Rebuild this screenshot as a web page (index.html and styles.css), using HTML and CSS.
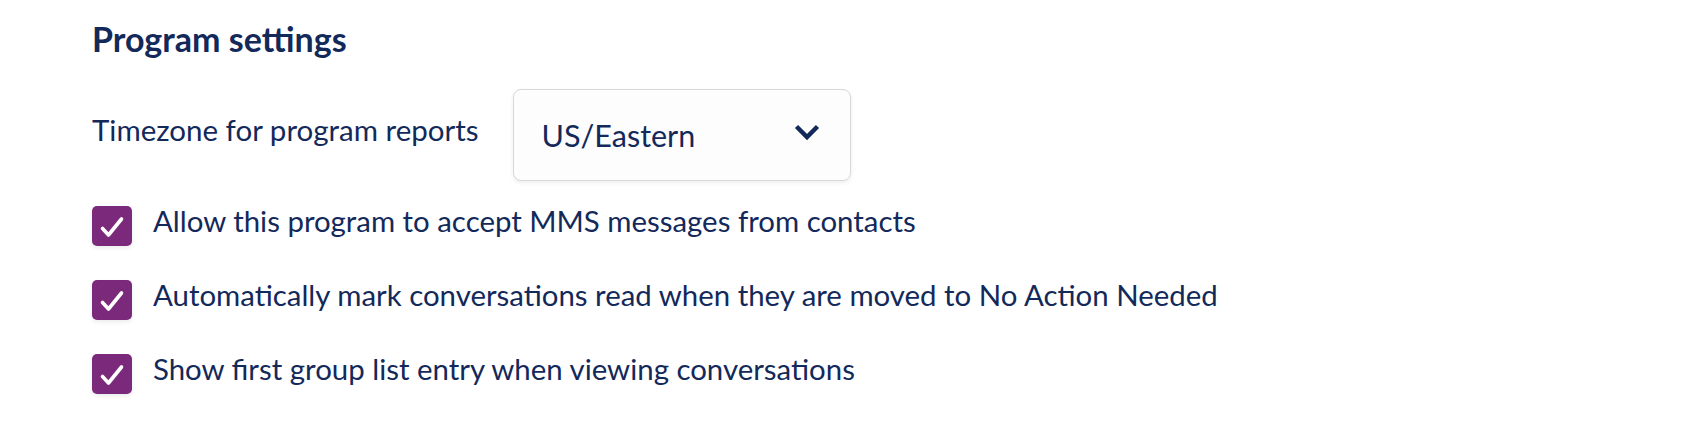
FILE: index.html
```html
<!DOCTYPE html>
<html lang="en">
<head>
    <meta charset="UTF-8">
    <meta name="viewport" content="width=device-width, initial-scale=1.0">
    <title>Program settings</title>
    <link rel="stylesheet" href="styles.css">
</head>
<body>
    <div class="settings">
        <h2>Program settings</h2>

        <div class="field-row">
            <label class="field-label" for="timezone">Timezone for program reports</label>
            <div class="select-box" id="timezone">
                <span class="select-value">US/Eastern</span>
                <svg class="chevron" width="26" height="17" viewBox="0 0 26 17">
                    <polyline points="2.5,2.5 13,13 23.5,2.5" fill="none" stroke="#13295a" stroke-width="4.5" stroke-linecap="butt" stroke-linejoin="miter"/>
                </svg>
            </div>
        </div>

        <div class="option">
            <span class="checkbox">
                <svg width="40" height="40" viewBox="0 0 40 40"><path d="M10.5 22.5 L16.5 29 L29.5 13" fill="none" stroke="#fff" stroke-width="3.6" stroke-linecap="round" stroke-linejoin="round"/></svg>
            </span>
            <span class="option-text">Allow this program to accept MMS messages from contacts</span>
        </div>
        <div class="option">
            <span class="checkbox">
                <svg width="40" height="40" viewBox="0 0 40 40"><path d="M10.5 22.5 L16.5 29 L29.5 13" fill="none" stroke="#fff" stroke-width="3.6" stroke-linecap="round" stroke-linejoin="round"/></svg>
            </span>
            <span class="option-text">Automatically mark conversations read when they are moved to No Action Needed</span>
        </div>
        <div class="option">
            <span class="checkbox">
                <svg width="40" height="40" viewBox="0 0 40 40"><path d="M10.5 22.5 L16.5 29 L29.5 13" fill="none" stroke="#fff" stroke-width="3.6" stroke-linecap="round" stroke-linejoin="round"/></svg>
            </span>
            <span class="option-text">Show first group list entry when viewing conversations</span>
        </div>
    </div>
</body>
</html>
```

FILE: styles.css
```css
body {
    font-family: Lato, "Noto Sans", sans-serif;
    color: #13295a;
    background: #fff;
    margin: 0;
}

.settings {
    padding: 19px 0 0 92px;
}

h2 {
    font-size: 34px;
    font-weight: 700;
    line-height: 40px;
    margin: 0 0 30px 0;
}

.field-row {
    display: flex;
    align-items: flex-start;
    gap: 34px;
    margin-bottom: 25px;
}

.field-label {
    font-size: 29.5px;
    line-height: 36px;
    margin-top: 23px;
}

.select-box {
    width: 338px;
    height: 92px;
    box-sizing: border-box;
    border: 1.5px solid #d8d8d8;
    border-radius: 8px;
    background: #fdfdfd;
    box-shadow: 0 2px 4px rgba(0, 0, 0, 0.07);
    display: flex;
    align-items: center;
    justify-content: space-between;
    padding: 0 30px 0 28px;
}

.select-value {
    font-size: 30.5px;
    line-height: 36px;
}

.chevron {
    display: block;
    margin-bottom: 6px;
}

.option {
    display: flex;
    align-items: flex-start;
    gap: 21px;
    margin-bottom: 34px;
}

.checkbox {
    width: 40px;
    height: 40px;
    background: #7b2a7b;
    border-radius: 5px;
    box-shadow: 0 2px 4px rgba(0, 0, 0, 0.08);
    flex-shrink: 0;
}

.checkbox svg {
    display: block;
}

.option-text {
    font-size: 29.4px;
    line-height: 36px;
    margin-top: -3px;
}
```
